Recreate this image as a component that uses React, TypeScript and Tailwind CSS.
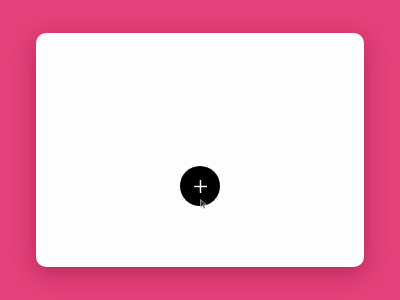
export default function App() {
  return (
    <div className="w-[400px] h-[300px] bg-[#e5417a] flex items-center justify-center">
      {/* Card */}
      <div className="w-[328px] h-[234px] bg-[#fdfdfd] rounded-[10px] shadow-[0_6px_24px_rgba(120,10,50,0.45)] flex flex-col items-center pt-[133px]">
        <button className="relative w-10 h-10 rounded-full bg-black flex items-center justify-center">
          <svg width="15" height="15" viewBox="0 0 15 15">
            <path d="M7.5 1v13M1 7.5h13" stroke="#ffffff" strokeWidth="1.5" />
          </svg>
          {/* cursor */}
          <svg
            className="absolute left-[20px] top-[33px]"
            width="7"
            height="10"
            viewBox="0 0 7 10"
          >
            <path d="M0.5 0.5v8l2-2 1.5 3 1.2-.6-1.5-2.9h2.8z" fill="#333" stroke="#ddd" strokeWidth="0.6" />
          </svg>
        </button>
      </div>
    </div>
  )
}
